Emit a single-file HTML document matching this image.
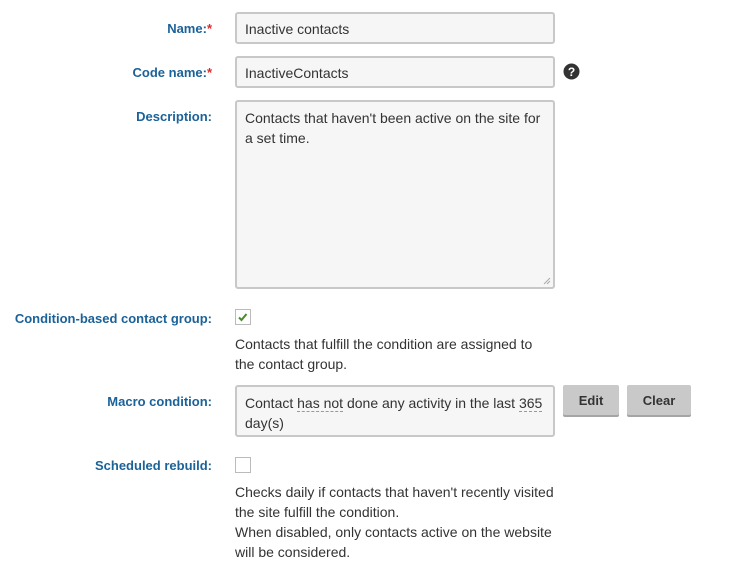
<!DOCTYPE html>
<html><head><style>
body{margin:0;width:740px;height:573px;background:#fff;font-family:"Liberation Sans",sans-serif;font-size:14px;color:#333;position:relative;overflow:hidden}
.l{position:absolute;right:528px;color:#1b6299;font-weight:bold;font-size:13px;white-space:nowrap;line-height:18px}
.l i{color:#e2262a;font-style:normal}
.in{position:absolute;left:235px;border:2px solid #c8c8c8;border-radius:3px;background:#f6f6f6;box-sizing:border-box;padding:0 8px;line-height:20px;width:320px;white-space:nowrap}
.cb{position:absolute;left:235px;width:16px;height:16px;border:1px solid #bbb;box-sizing:border-box;background:#fff}
.t{position:absolute;left:235px;line-height:20px;white-space:nowrap}
.b{position:absolute;top:385px;height:30px;background:#c9c9c9;border-radius:2px;box-shadow:0 2px 0 #a5a5a5;font-weight:bold;text-align:center;line-height:32px;color:#333;font-size:13px}
.d{border-bottom:1px dashed #999}
</style></head><body>
<div class="l" style="top:20px">Name:<i>*</i></div>
<div class="in" style="top:12px;height:32px;line-height:30px">Inactive contacts</div>
<div class="l" style="top:64px">Code name:<i>*</i></div>
<div class="in" style="top:56px;height:32px;line-height:30px">InactiveContacts</div>
<svg style="position:absolute;left:563px;top:63px" width="17" height="17" viewBox="0 0 17 17"><circle cx="8.5" cy="8.5" r="8" fill="#333"/><text x="8.5" y="13" font-size="12" font-weight="bold" fill="#fff" text-anchor="middle" font-family="Liberation Sans">?</text></svg>
<div class="l" style="top:108px">Description:</div>
<div class="in" style="top:100px;height:189px;padding-top:6px">Contacts that haven't been active on the site for<br>a set time.
<svg style="position:absolute;right:2px;bottom:2px" width="8" height="8" viewBox="0 0 8 8"><path d="M7 1L1 7M7 4L4 7" stroke="#aaa" stroke-width="1"/></svg></div>
<div class="l" style="top:310px">Condition-based contact group:</div>
<div class="cb" style="top:309px"><svg width="14" height="14" viewBox="0 0 14 14"><path d="M3 7.5l2.5 2.5 5-6" stroke="#4a8a2a" stroke-width="2" fill="none"/></svg></div>
<div class="t" style="top:334px">Contacts that fulfill the condition are assigned to<br>the contact group.</div>
<div class="l" style="top:393px">Macro condition:</div>
<div class="in" style="top:385px;height:52px;padding-top:6px">Contact <span class="d">has not</span> done any activity in the last <span class="d">365</span><br>day(s)</div>
<div class="b" style="left:563px;width:56px">Edit</div>
<div class="b" style="left:627px;width:64px">Clear</div>
<div class="l" style="top:457px">Scheduled rebuild:</div>
<div class="cb" style="top:457px"></div>
<div class="t" style="top:482px">Checks daily if contacts that haven't recently visited<br>the site fulfill the condition.<br>When disabled, only contacts active on the website<br>will be considered.</div>
</body></html>
